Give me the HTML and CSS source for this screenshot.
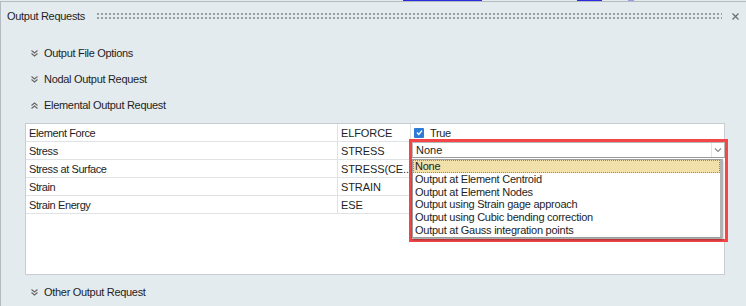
FILE: index.html
```html
<!DOCTYPE html>
<html lang="en">

<head>
  <meta charset="UTF-8">
  <title>Output Requests</title>
  <link rel="stylesheet" href="styles.css">
</head>

<body>
  <!-- bits of the window above, cut off -->
  <div class="top-strip">
    <span class="blip" style="margin-left: 403px; width: 79px;"></span>
    <span class="blip" style="margin-left: 95px; width: 25px;"></span>
    <span class="blip light" style="margin-left: 26px; width: 6px;"></span>
  </div>

  <div class="panel">
    <div class="title-bar">
      <span class="title">Output Requests</span>
      <span class="grip"></span>
      <svg class="close" width="9" height="9" viewBox="0 0 9 9">
        <path d="M1.5 1.5 L7.5 7.5 M7.5 1.5 L1.5 7.5" stroke="#707070" stroke-width="1.3" fill="none" />
      </svg>
    </div>

    <div class="content">
      <div class="section">
        <svg class="chev" width="9" height="9" viewBox="0 0 9 9">
          <path d="M1.5 1.5 L4.5 4 L7.5 1.5 M1.5 4.5 L4.5 7 L7.5 4.5" />
        </svg>
        <span>Output File Options</span>
      </div>
      <div class="section">
        <svg class="chev" width="9" height="9" viewBox="0 0 9 9">
          <path d="M1.5 1.5 L4.5 4 L7.5 1.5 M1.5 4.5 L4.5 7 L7.5 4.5" />
        </svg>
        <span>Nodal Output Request</span>
      </div>
      <div class="section">
        <svg class="chev" width="9" height="9" viewBox="0 0 9 9">
          <path d="M1.5 4.5 L4.5 2 L7.5 4.5 M1.5 7.5 L4.5 5 L7.5 7.5" />
        </svg>
        <span>Elemental Output Request</span>
      </div>

      <div class="grid-box">
        <div class="row">
          <div class="cell name">Element Force</div>
          <div class="cell key">ELFORCE</div>
          <div class="cell value">
            <span class="check">
              <svg width="9" height="9" viewBox="0 0 9 9">
                <path d="M2 4.6 L3.8 6.4 L7 2.6" stroke="#fff" stroke-width="1.4" fill="none" />
              </svg>
            </span>
            True
          </div>
        </div>
        <div class="row">
          <div class="cell name">Stress</div>
          <div class="cell key">STRESS</div>
          <div class="cell value"></div>
        </div>
        <div class="row">
          <div class="cell name">Stress at Surface</div>
          <div class="cell key">STRESS(CE...</div>
          <div class="cell value"></div>
        </div>
        <div class="row">
          <div class="cell name">Strain</div>
          <div class="cell key">STRAIN</div>
          <div class="cell value"></div>
        </div>
        <div class="row">
          <div class="cell name">Strain Energy</div>
          <div class="cell key">ESE</div>
          <div class="cell value"></div>
        </div>

        <!-- open combo box, highlighted in red -->
        <div class="combo-popup">
          <div class="combo">
            <span class="combo-text">None</span>
            <span class="combo-arrow">
              <svg width="8" height="6" viewBox="0 0 8 6">
                <path d="M1 1.5 L4 4.5 L7 1.5" stroke="#888" stroke-width="1.1" fill="none" />
              </svg>
            </span>
          </div>
          <div class="list">
            <div class="item selected">None</div>
            <div class="item">Output at Element Centroid</div>
            <div class="item">Output at Element Nodes</div>
            <div class="item">Output using Strain gage approach</div>
            <div class="item">Output using Cubic bending correction</div>
            <div class="item">Output at Gauss integration points</div>
          </div>
        </div>
      </div>

      <div class="section">
        <svg class="chev" width="9" height="9" viewBox="0 0 9 9">
          <path d="M1.5 1.5 L4.5 4 L7.5 1.5 M1.5 4.5 L4.5 7 L7.5 4.5" />
        </svg>
        <span>Other Output Request</span>
      </div>
    </div>
  </div>
</body>

</html>
```

FILE: styles.css
```css
/* Painel de requisicoes de saida */
body {
  font-family: 'Liberation Sans', Arial, sans-serif;
  font-size: 11px;
  color: #1e1e1e;
  background: #e4ebee;
  margin: 0;
  padding: 0;
  overflow: hidden;
}

.top-strip {
  display: flex;
  height: 1px;
}

.blip {
  height: 1px;
  background: #2a2ae0;
}

.blip.light {
  background: #9a9ae8;
}

.panel {
  border-top: 1px solid #b4bbbf;
  border-left: 1px solid #b4bbbf;
  height: 304px;
}

.title-bar {
  display: flex;
  align-items: center;
  height: 28px;
  padding-left: 6px;
  padding-right: 5px;
}

.title {
  letter-spacing: -0.3px;
}

.grip {
  flex: 1;
  height: 8px;
  margin: 0 9px 0 11px;
  background-image: radial-gradient(circle, #9a9ea1 0.9px, transparent 1.1px);
  background-size: 4px 4px;
}

.close {
  display: block;
  margin-right: 1px;
}

.content {
  padding-top: 10px;
}

.section {
  display: flex;
  align-items: center;
  height: 26px;
  padding-left: 29px;
  gap: 5px;
  letter-spacing: -0.3px;
}

.chev {
  display: block;
}

.chev path {
  stroke: #666;
  stroke-width: 1.1;
  fill: none;
}

.grid-box {
  position: relative;
  margin: 5px 21px 4px 24px;
  height: 150px;
  background: #fff;
  border: 1px solid #c8cdd0;
}

.row {
  display: flex;
  height: 17px;
  border-bottom: 1px solid #dfe3e5;
}

.cell {
  display: flex;
  align-items: center;
  padding-left: 3px;
  letter-spacing: -0.4px;
}

.name {
  width: 308px;
  border-right: 1px solid #dfe3e5;
}

.key {
  width: 69px;
  border-right: 1px solid #dfe3e5;
  letter-spacing: -0.1px;
}

.value {
  flex: 1;
  gap: 6px;
}

.check {
  display: flex;
  align-items: center;
  justify-content: center;
  width: 10px;
  height: 10px;
  background: #2c7bd6;
  border-radius: 1px;
}

.combo-popup {
  position: absolute;
  left: 383px;
  top: 15px;
  width: 313px;
  height: 97px;
  border: 3px solid #f44648;
  background: #fff;
}

.combo {
  display: flex;
  height: 14px;
  border: 1px solid #b8b8b8;
  border-bottom-color: #9a9a9a;
}

.combo-text {
  flex: 1;
  padding-left: 3px;
  line-height: 14px;
}

.combo-arrow {
  display: flex;
  align-items: center;
  justify-content: center;
  width: 12px;
  border-left: 1px solid #e4e4e4;
}

.list {
  margin-top: 1px;
  margin-right: 2px;
  height: 77px;
  border: 1px solid #9c9c9c;
  border-right: 3px solid #b3b3b3;
  box-shadow: 0 2px 2px rgba(0, 0, 0, 0.35);
}

.item {
  height: 12.8px;
  line-height: 12.8px;
  padding-left: 2px;
  letter-spacing: -0.25px;
}

.item.selected {
  background: #f2e0ab;
  outline: 1px dotted #8a8a8a;
  outline-offset: -1px;
}
```
